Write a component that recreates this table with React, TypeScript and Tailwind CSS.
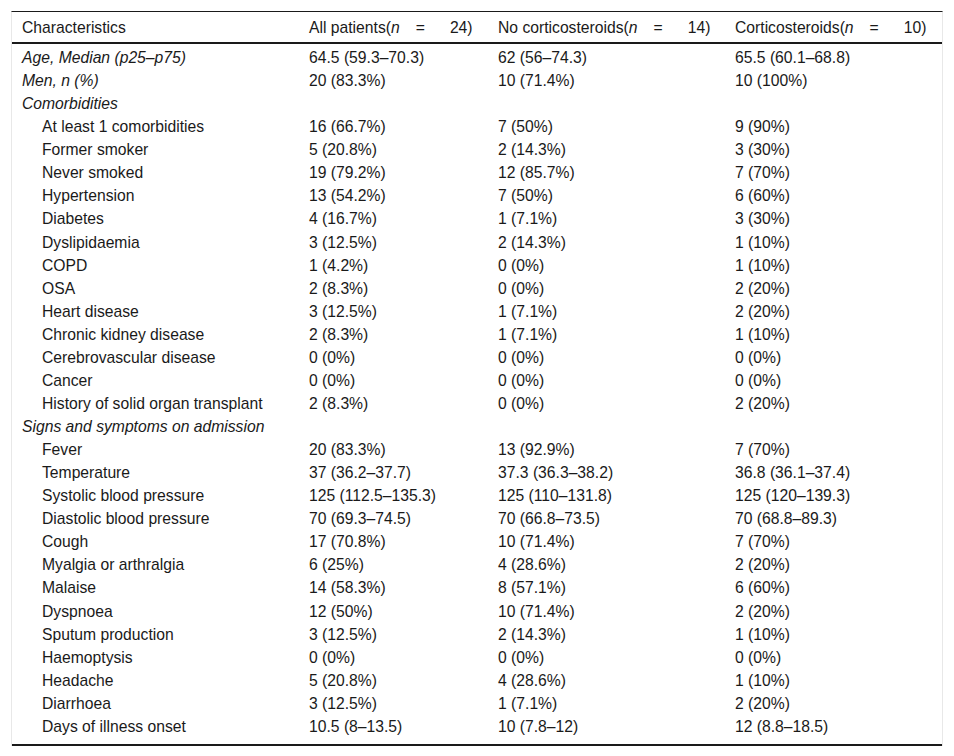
import React from "react";

type Row = { label: string; a?: string; b?: string; c?: string; indent?: boolean; italic?: boolean };

const rows: Row[] = [
  { label: "Age, Median (p25–p75)", a: "64.5 (59.3–70.3)", b: "62 (56–74.3)", c: "65.5 (60.1–68.8)", italic: true },
  { label: "Men, n (%)", a: "20 (83.3%)", b: "10 (71.4%)", c: "10 (100%)", italic: true },
  { label: "Comorbidities", italic: true },
  { label: "At least 1 comorbidities", a: "16 (66.7%)", b: "7 (50%)", c: "9 (90%)", indent: true },
  { label: "Former smoker", a: "5 (20.8%)", b: "2 (14.3%)", c: "3 (30%)", indent: true },
  { label: "Never smoked", a: "19 (79.2%)", b: "12 (85.7%)", c: "7 (70%)", indent: true },
  { label: "Hypertension", a: "13 (54.2%)", b: "7 (50%)", c: "6 (60%)", indent: true },
  { label: "Diabetes", a: "4 (16.7%)", b: "1 (7.1%)", c: "3 (30%)", indent: true },
  { label: "Dyslipidaemia", a: "3 (12.5%)", b: "2 (14.3%)", c: "1 (10%)", indent: true },
  { label: "COPD", a: "1 (4.2%)", b: "0 (0%)", c: "1 (10%)", indent: true },
  { label: "OSA", a: "2 (8.3%)", b: "0 (0%)", c: "2 (20%)", indent: true },
  { label: "Heart disease", a: "3 (12.5%)", b: "1 (7.1%)", c: "2 (20%)", indent: true },
  { label: "Chronic kidney disease", a: "2 (8.3%)", b: "1 (7.1%)", c: "1 (10%)", indent: true },
  { label: "Cerebrovascular disease", a: "0 (0%)", b: "0 (0%)", c: "0 (0%)", indent: true },
  { label: "Cancer", a: "0 (0%)", b: "0 (0%)", c: "0 (0%)", indent: true },
  { label: "History of solid organ transplant", a: "2 (8.3%)", b: "0 (0%)", c: "2 (20%)", indent: true },
  { label: "Signs and symptoms on admission", italic: true },
  { label: "Fever", a: "20 (83.3%)", b: "13 (92.9%)", c: "7 (70%)", indent: true },
  { label: "Temperature", a: "37 (36.2–37.7)", b: "37.3 (36.3–38.2)", c: "36.8 (36.1–37.4)", indent: true },
  { label: "Systolic blood pressure", a: "125 (112.5–135.3)", b: "125 (110–131.8)", c: "125 (120–139.3)", indent: true },
  { label: "Diastolic blood pressure", a: "70 (69.3–74.5)", b: "70 (66.8–73.5)", c: "70 (68.8–89.3)", indent: true },
  { label: "Cough", a: "17 (70.8%)", b: "10 (71.4%)", c: "7 (70%)", indent: true },
  { label: "Myalgia or arthralgia", a: "6 (25%)", b: "4 (28.6%)", c: "2 (20%)", indent: true },
  { label: "Malaise", a: "14 (58.3%)", b: "8 (57.1%)", c: "6 (60%)", indent: true },
  { label: "Dyspnoea", a: "12 (50%)", b: "10 (71.4%)", c: "2 (20%)", indent: true },
  { label: "Sputum production", a: "3 (12.5%)", b: "2 (14.3%)", c: "1 (10%)", indent: true },
  { label: "Haemoptysis", a: "0 (0%)", b: "0 (0%)", c: "0 (0%)", indent: true },
  { label: "Headache", a: "5 (20.8%)", b: "4 (28.6%)", c: "1 (10%)", indent: true },
  { label: "Diarrhoea", a: "3 (12.5%)", b: "1 (7.1%)", c: "2 (20%)", indent: true },
  { label: "Days of illness onset", a: "10.5 (8–13.5)", b: "10 (7.8–12)", c: "12 (8.8–18.5)", indent: true },
];

function Head({ name, n }: { name: string; n: string }) {
  return (
    <span>
      {name}(<i>n</i>
      <span className="inline-block ml-[16px] mr-[25px]">=</span>
      {n})
    </span>
  );
}

export default function App() {
  return (
    <div className="bg-white w-[954px] h-[756px] pt-[11px] pl-[11px]" style={{ fontFamily: '"Liberation Sans", Arial, sans-serif' }}>
      <div className="w-[932px] border-t border-t-[#1a1a1a] border-l border-r border-l-[#e8e8e8] border-r-[#e8e8e8] text-[15.7px] text-[#1a1a1a] leading-[23px]">
        <div className="grid grid-cols-[287px_189px_237px_217px] h-[32px] items-center border-b-2 border-b-[#1a1a1a]">
          <div className="pl-[10px]">Characteristics</div>
          <div className="pl-[10px]"><Head name="All patients" n="24" /></div>
          <div className="pl-[10px]"><Head name="No corticosteroids" n="14" /></div>
          <div className="pl-[10px]"><Head name="Corticosteroids" n="10" /></div>
        </div>
        <div className="pt-[2px] pb-[6px] border-b-2 border-b-[#1a1a1a]">
          {rows.map((r, i) => (
            <div key={i} className="grid grid-cols-[287px_189px_237px_217px] h-[23.07px] items-center">
              <div className={(r.indent ? "pl-[30px]" : "pl-[10px]") + (r.italic ? " italic" : "")}>{r.label}</div>
              <div className="pl-[10px]">{r.a ?? ""}</div>
              <div className="pl-[10px]">{r.b ?? ""}</div>
              <div className="pl-[10px]">{r.c ?? ""}</div>
            </div>
          ))}
        </div>
      </div>
    </div>
  );
}
